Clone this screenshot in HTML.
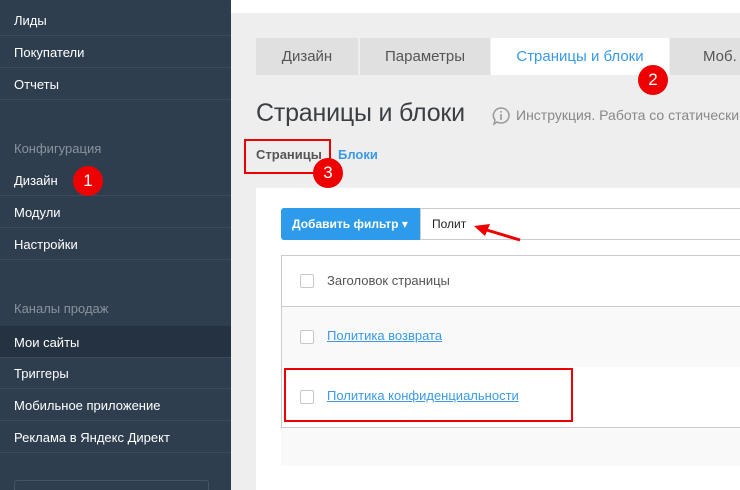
<!DOCTYPE html>
<html><head><meta charset="utf-8"><style>
*{margin:0;padding:0;box-sizing:border-box}
html,body{width:740px;height:490px;overflow:hidden}
body{position:relative;background:#eee;font-family:"Liberation Sans","DejaVu Sans",sans-serif}
.a{position:absolute}
#sb{left:0;top:0;width:231px;height:490px;background:#2f3e4f;overflow:hidden}
.it{position:absolute;left:0;width:231px;height:32px;border-bottom:1px solid #3c4b5c;color:#fff;font-size:13px;line-height:33px;padding-left:14px}
.hd{position:absolute;left:14px;color:#8a939c;font-size:13px}
.tab{position:absolute;top:38px;height:37px;background:#e0e0e0;color:#555;font-size:15px;line-height:37px;text-align:center;white-space:nowrap}
.bd{position:absolute;width:30px;height:30px;border-radius:50%;background:#e00;color:#fff;font-size:17px;line-height:30px;text-align:center}
.cb{position:absolute;left:300px;width:14px;height:14px;border:1px solid #c8c8c8;border-radius:2px;background:#fff}
.lk{position:absolute;left:327px;color:#3a9ae8;font-size:13px;text-decoration:underline}
</style></head><body>
<div class="a" style="left:231px;top:0;width:509px;height:13px;background:#fff"></div>
<div id="sb" class="a">
<div class="it" style="top:4px">Лиды</div>
<div class="it" style="top:36px">Покупатели</div>
<div class="it" style="top:68px">Отчеты</div>
<div class="hd" style="top:141px">Конфигурация</div>
<div class="it" style="top:164px">Дизайн</div>
<div class="it" style="top:196px">Модули</div>
<div class="it" style="top:228px">Настройки</div>
<div class="hd" style="top:301px">Каналы продаж</div>
<div class="it" style="top:326px;background:#243242">Мои сайты</div>
<div class="it" style="top:357px">Триггеры</div>
<div class="it" style="top:389px">Мобильное приложение</div>
<div class="it" style="top:421px">Реклама в Яндекс Директ</div>
<div class="a" style="left:14px;top:480px;width:195px;height:20px;border:1px solid #45546a;border-radius:3px"></div>
</div>
<div class="bd" style="left:73px;top:166px">1</div>
<div class="tab" style="left:256px;width:102px">Дизайн</div>
<div class="tab" style="left:360px;width:130px">Параметры</div>
<div class="tab" style="left:491px;width:178px;background:#fff;color:#3a9ae8">Страницы и блоки</div>
<div class="tab" style="left:670px;width:70px;text-align:left;padding-left:33px">Моб. в</div>
<div class="bd" style="left:638px;top:65px">2</div>
<div class="a" style="left:256px;top:99px;font-size:25px;color:#3a3f44;letter-spacing:-0.2px">Страницы и блоки</div>
<svg class="a" style="left:491px;top:106px" width="20" height="20" viewBox="0 0 20 20"><path d="M10 2a8 7.5 0 1 1-4 14l-3 2 1-4A8 7.5 0 0 1 10 2z" fill="none" stroke="#999" stroke-width="1.5"/><rect x="9.2" y="8" width="1.6" height="6" fill="#999"/><rect x="9.2" y="5" width="1.6" height="1.6" fill="#999"/></svg>
<div class="a" style="left:516px;top:107px;font-size:14px;color:#888;white-space:nowrap">Инструкция. Работа со статическим</div>
<div class="a" style="left:256px;top:147px;font-size:13px;font-weight:bold;color:#555">Страницы</div>
<div class="a" style="left:338px;top:147px;font-size:13px;font-weight:bold;color:#3a9ae8">Блоки</div>
<div class="a" style="left:244px;top:139px;width:87px;height:35px;border:2px solid #e00"></div>
<div class="bd" style="left:313px;top:158px">3</div>
<div class="a" style="left:256px;top:188px;width:484px;height:302px;background:#fff"></div>
<div class="a" style="left:281px;top:208px;width:140px;height:32px;background:#2d9bea;border-radius:3px 0 0 3px;color:#fff;font-size:12px;font-weight:bold;line-height:32px;padding-left:11px">Добавить фильтр ▾</div>
<div class="a" style="left:420px;top:208px;width:330px;height:32px;border:1px solid #ccc;font-size:12px;line-height:30px;padding-left:11px;color:#222">Полит</div>
<svg class="a" style="left:470px;top:220px" width="60" height="25"><path d="M50 20L10 8" stroke="#e00" stroke-width="3"/><path d="M4 6l16-2-5 12z" fill="#e00"/></svg>
<div class="a" style="left:281px;top:255px;width:470px;height:173px;border:1px solid #ccc"></div>
<div class="a" style="left:282px;top:306px;width:460px;height:61px;background:#f9f9f9;border-top:1px solid #ccc"></div>
<div class="a" style="left:281px;top:428px;width:460px;height:38px;background:#f9f9f9"></div>
<div class="cb" style="top:274px"></div>
<div class="a" style="left:327px;top:273px;font-size:13px;color:#555">Заголовок страницы</div>
<div class="cb" style="top:330px"></div>
<div class="lk" style="top:328px">Политика возврата</div>
<div class="cb" style="top:390px"></div>
<div class="lk" style="top:388px">Политика конфиденциальности</div>
<div class="a" style="left:284px;top:368px;width:289px;height:54px;border:2px solid #e00"></div>
</body></html>
